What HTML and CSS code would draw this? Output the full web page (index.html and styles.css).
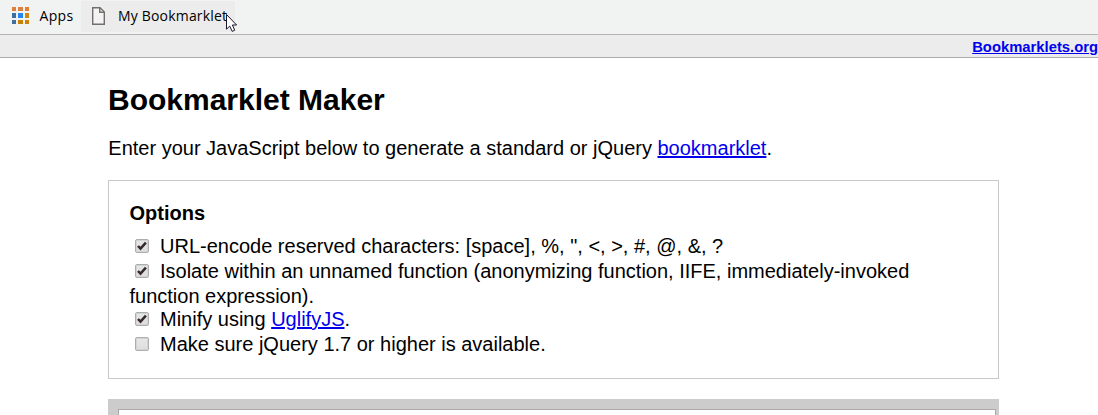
FILE: index.html
```html
<!DOCTYPE html>
<html lang="en">
<head>
<meta charset="utf-8">
<title>Bookmarklet Maker</title>
<link rel="stylesheet" href="styles.css">
</head>
<body>
<nav class="bookmarks">
  <div class="apps">
    <svg class="grid" width="17" height="17" viewBox="0 0 17 17">
      <g fill="#e07f3c"><rect width="4" height="4"/><rect x="6" width="5" height="4"/><rect x="13" width="4" height="4"/></g>
      <rect y="6" width="4" height="5" fill="#3f709d"/><rect x="6" y="6" width="5" height="5" fill="#2389ef"/><rect x="13" y="6" width="4" height="5" fill="#cd8912"/>
      <rect y="13" width="4" height="4" fill="#3f709d"/><rect x="6" y="13" width="5" height="4" fill="#c98205"/><rect x="13" y="13" width="4" height="4" fill="#c98205"/>
    </svg>
    <span class="apps-label">Apps</span>
  </div>
  <div class="bookmark">
    <svg class="page" width="13" height="18" viewBox="0 0 13 18" fill="none" stroke="#746e6c" stroke-width="1.4"><path fill="#f3f3f3" d="M.7.7H8L12.3 5V17.3H.7Z"/><path d="M7.7.7V5.3H12.3"/></svg>
    <span class="bookmark-label">My Bookmarklet</span>
    <svg class="pointer" width="13" height="20" viewBox="0 0 13 20"><path fill="#fff" stroke="#17142b" stroke-linejoin="miter" d="M1.5 1.5V16.2L4.7 13.1L7.2 18.4L9.7 17.2L7.4 12H11.6Z"/></svg>
  </div>
</nav>
<div class="sitebar"><a href="#">Bookmarklets.org</a></div>
<main class="content">
  <h1>Bookmarklet Maker</h1>
  <p class="intro">Enter your JavaScript below to generate a standard or jQuery <a href="#">bookmarklet</a>.</p>
  <section class="options">
    <h2>Options</h2>
    <label class="option"><span class="check"><svg width="14" height="14" viewBox="0 0 14 14"><path d="M3 7L5.5 9.7L10.9 3.6"/></svg></span>URL-encode reserved characters: [space], %, ", &lt;, &gt;, #, @, &amp;, ?</label>
    <label class="option"><span class="check"><svg width="14" height="14" viewBox="0 0 14 14"><path d="M3 7L5.5 9.7L10.9 3.6"/></svg></span>Isolate within an unnamed function (anonymizing function, IIFE, immediately-invoked function expression).</label>
    <label class="option minify"><span class="check"><svg width="14" height="14" viewBox="0 0 14 14"><path d="M3 7L5.5 9.7L10.9 3.6"/></svg></span>Minify using <a href="#">UglifyJS</a>.</label>
    <label class="option"><span class="check"></span>Make sure jQuery 1.7 or higher is available.</label>
  </section>
  <section class="editor"><div class="code"></div></section>
</main>
</body>
</html>
```
FILE: styles.css
```css
* { box-sizing: border-box; }
body {
  margin: 0;
  height: 415px;
  overflow: hidden;
  background: #fff;
  color: #000;
  font: 20px/25px "Liberation Sans", Arial, sans-serif;
}
a { color: #0000ee; }
.bookmarks {
  display: flex;
  height: 35px;
  background: #f1f3f2;
  border-bottom: 1px solid #b4b4b4;
  font: 14px/20px "Open Sans", "Noto Sans", sans-serif;
}
.apps { display: flex; width: 81px; padding: 7px 0 0 12px; }
.grid { flex: none; }
.apps-label { margin: -1px 0 0 10.5px; letter-spacing: 0.3px; }
.bookmark {
  position: relative;
  display: flex;
  width: 154px;
  height: 31px;
  margin-top: 1px;
  padding: 6px 0 0 11px;
  background: #ececec;
}
.page { flex: none; }
.bookmark-label { margin: -1px 0 0 13px; letter-spacing: 0.18px; white-space: nowrap; }
.pointer { position: absolute; left: 144px; top: 12px; }
.sitebar {
  height: 23px;
  background: #ececec;
  border-bottom: 1px solid #aaa;
  font-size: 14.8px;
  font-weight: bold;
  line-height: 24px;
  text-align: right;
}
.content { width: 891px; margin-left: 108px; }
h1 { margin: 0; padding-top: 24px; font-size: 30px; line-height: 36px; }
.intro { margin: 0; padding: 18px 0 0 0.3px; }
.options {
  height: 199px;
  margin-top: 19px;
  padding: 20px 20px 20px 20.5px;
  border: 1px solid #c8c8c8;
}
h2 { margin: 0 0 8px; font-size: 20px; line-height: 25px; }
.option { display: block; }
.minify { margin-top: -2px; }
.check {
  display: inline-block;
  width: 14px;
  height: 14px;
  margin: 0 11px 0 5.5px;
  border: 1px solid #adadad;
  border-radius: 2px;
  background: linear-gradient(#e7e7e7, #dddddd);
  box-shadow: inset 0 0 0 1px #d4d4d4;
  vertical-align: 0;
}
.check svg { display: block; margin: -1px; fill: none; stroke: #352b29; stroke-width: 2.5; }
.editor { height: 16px; margin-top: 20px; padding: 10px 3px 0 10px; background: #ccc; }
.code { height: 6px; background: #fff; border: 1px solid #a9a9a9; border-bottom: 0; }
```
